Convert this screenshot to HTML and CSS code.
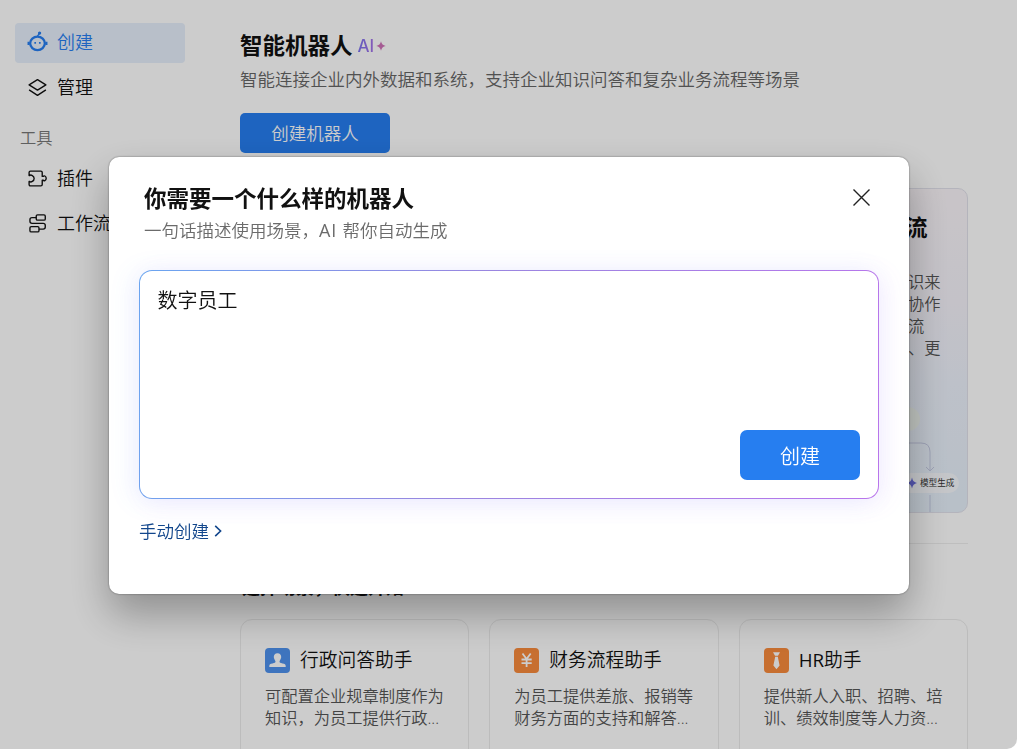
FILE: index.html
```html
<!DOCTYPE html>
<html lang="zh-CN">

<head>
    <meta charset="UTF-8">
    <meta name="viewport" content="width=device-width, initial-scale=1.0">
    <title>智能机器人</title>
    <link rel="stylesheet" href="styles.css">
</head>

<body>
    <div class="layout">
        <aside class="sidebar">
            <a class="nav-item active">
                <svg class="nav-icon" viewBox="0 0 20 20">
                    <path d="M10 4L11.8 1.2" />
                    <circle cx="12" cy="1" r=".9" fill="currentColor" />
                    <ellipse cx="10" cy="10.8" rx="7" ry="6.4" stroke-width="2.2" />
                    <path d="M1.5 9.2v3.2M18.5 9.2v3.2" stroke-width="2" />
                    <path d="M7.8 9.5v1.8M12.2 9.5v1.8" stroke-width="1.6" />
                </svg>
                <span>创建</span>
            </a>
            <a class="nav-item">
                <svg class="nav-icon" viewBox="0 0 20 20">
                    <path d="M10 2.5L18 7.5L10 12.5L2 7.5Z" />
                    <path d="M2 12.3L10 17.5L18 12.3" />
                </svg>
                <span>管理</span>
            </a>
            <p class="nav-label">工具</p>
            <a class="nav-item">
                <svg class="nav-icon" viewBox="0 0 20 20">
                    <path d="M2 7.2V4.3Q2 3 3.3 3H13.2Q14.5 3 14.5 4.3V8H15.6C15.8 6.8 18.3 7.6 18.3 9.8S15.8 12.8 15.6 11.6H14.5V15.7Q14.5 17 13.2 17H3.3Q2 17 2 15.7V12.8H2.6C3.6 14 6.8 12.6 6.8 10S3.6 6 2.6 7.2Z" />
                </svg>
                <span>插件</span>
            </a>
            <a class="nav-item">
                <svg class="nav-icon" viewBox="0 0 20 20">
                    <rect x="8.8" y="1.8" width="8.6" height="5" rx="1.2" />
                    <rect x="2.8" y="13" width="8.6" height="5" rx="1.2" />
                    <path d="M8.8 4.4H4.8Q2.8 4.4 2.8 6.4V7.9Q2.8 9.9 4.8 9.9H15.4Q17.4 9.9 17.4 11.9V13.4Q17.4 15.4 15.4 15.4H11.4" />
                </svg>
                <span>工作流</span>
            </a>
        </aside>

        <main class="main">
            <div class="page-title">
                <h1>智能机器人</h1>
                <span class="ai-tag">AI</span>
                <svg class="ai-star" viewBox="0 0 10 10">
                    <path d="M5 .3Q5.8 4.2 9.7 5Q5.8 5.8 5 9.7Q4.2 5.8 .3 5Q4.2 4.2 5 .3Z" />
                </svg>
            </div>
            <p class="page-desc">智能连接企业内外数据和系统，支持企业知识问答和复杂业务流程等场景</p>
            <button class="create-btn">创建机器人</button>

            <section class="features">
                <article class="feature">
                    <h2>流</h2>
                    <p>识来<br>协作<br>流<br>、更</p>
                    <svg class="flow" viewBox="0 0 228 130">
                        <circle cx="168" cy="37" r="12" class="flow-glow" />
                        <path d="M100 61H181Q190 61 190 70V89M186 85L190 89L194 85M190 113V130" class="flow-line" />
                        <rect x="160" y="91" width="59" height="20" rx="10" class="flow-tag" />
                        <path d="M172 95.5Q172.8 100.2 177 101Q172.8 101.8 172 106.5Q171.2 101.8 167 101Q171.2 100.2 172 95.5Z" class="flow-star" />
                        <text x="180" y="104.2" class="flow-text">模型生成</text>
                    </svg>
                </article>
            </section>

            <h2 class="section-title">选择场景，快速开始</h2>
            <section class="scenes">
                <article class="scene">
                    <h3>
                        <svg class="scene-icon blue" viewBox="0 0 25 25">
                            <path d="M12.5 5.2C10 5.2 8.6 7 8.8 9.3C9 11.3 10.4 12.4 10.5 13.6C10.5 14.8 9.8 15 7.5 15.4C5.2 15.8 4.3 16.4 4.3 18V19H20.7V18C20.7 16.4 19.8 15.8 17.5 15.4C15.2 15 14.5 14.8 14.5 13.6C14.6 12.4 16 11.3 16.2 9.3C16.4 7 15 5.2 12.5 5.2Z" />
                        </svg>
                        行政问答助手
                    </h3>
                    <p>可配置企业规章制度作为<br>知识，为员工提供行政...</p>
                </article>
                <article class="scene">
                    <h3>
                        <svg class="scene-icon orange" viewBox="0 0 25 25">
                            <path class="stroke" d="M8.5 5.5L12.6 11L16.7 5.5M12.6 11V19M7.5 11.5H17.7M7.5 15.2H17.7" />
                        </svg>
                        财务流程助手
                    </h3>
                    <p>为员工提供差旅、报销等<br>财务方面的支持和解答...</p>
                </article>
                <article class="scene">
                    <h3>
                        <svg class="scene-icon orange" viewBox="0 0 25 25">
                            <path d="M9 4.2H16L14 7.8H11ZM11.2 8.8H13.8L15.6 17.5L12.5 21.2L9.4 17.5Z" />
                        </svg>
                        <span><span class="latin">HR</span>助手</span>
                    </h3>
                    <p>提供新人入职、招聘、培<br>训、绩效制度等人力资...</p>
                </article>
            </section>
        </main>
    </div>

    <div class="mask">
        <div class="modal">
            <header class="modal-header">
                <div>
                    <h2>你需要一个什么样的机器人</h2>
                    <p>一句话描述使用场景，<span class="latin">AI </span>帮你自动生成</p>
                </div>
                <svg class="close" viewBox="0 0 17 17">
                    <path d="M.5 .5L16.5 16.5M16.5 .5L.5 16.5" />
                </svg>
            </header>
            <div class="prompt">
                <p>数字员工</p>
                <button class="submit-btn">创建</button>
            </div>
            <a class="manual">
                手动创建
                <svg viewBox="0 0 8 12">
                    <path d="M1.2 .8L6.6 6L1.2 11.2" />
                </svg>
            </a>
        </div>
    </div>
</body>

</html>
```
FILE: styles.css
```css
* {
    box-sizing: border-box;
    margin: 0;
    padding: 0;
}

html,
body {
    width: 100%;
    height: 100%;
    overflow: hidden;
}

body {
    background: #fff;
    color: #111;
    font-family: "Open Sans", "Noto Sans CJK SC", sans-serif;
    font-size: 17.5px;
    font-weight: 350;
}

button {
    border: none;
    color: #fff;
    font-family: inherit;
    font-weight: 350;
}

svg {
    flex: none;
    fill: none;
    stroke: currentColor;
}

.latin {
    font-weight: 400;
}

.layout {
    display: flex;
    height: 749px;
    overflow: hidden;
}

/* sidebar */
.sidebar {
    width: 200px;
    padding: 22.5px 15px;
    flex: none;
}

.nav-item {
    display: flex;
    align-items: center;
    gap: 9px;
    height: 40px;
    margin-bottom: 5px;
    padding-left: 12px;
    border-radius: 4px;
    font-size: 18px;
    line-height: 30px;
    white-space: nowrap;
}

.nav-item span {
    padding-bottom: 2px;
}

.nav-item.active {
    background: #e6effc;
    color: #267ef0;
}

.nav-icon {
    width: 21px;
    height: 21px;
    stroke-width: 1.3;
    stroke-linejoin: round;
    overflow: visible;
}

.nav-label {
    height: 46px;
    padding-left: 5px;
    color: #777;
    font-size: 16.25px;
    line-height: 51px;
}

/* main */
.main {
    width: 728px;
    margin-left: 40px;
    padding-top: 30px;
}

.page-title {
    display: flex;
    align-items: center;
    height: 32px;
}

.page-title h1 {
    font-size: 22.5px;
    font-weight: 700;
    line-height: 34px;
}

.ai-tag {
    margin-left: 5px;
    background: linear-gradient(90deg, #7a72f0, #a874e8);
    -webkit-background-clip: text;
    background-clip: text;
    color: transparent;
    font-family: Inter, sans-serif;
    font-size: 17px;
    font-weight: 500;
}

.ai-star {
    width: 10px;
    height: 10px;
    margin-left: 2px;
    fill: #cf72b8;
    stroke: none;
}

.page-desc {
    height: 34px;
    color: #666;
    line-height: 35px;
    white-space: nowrap;
}

.create-btn {
    display: block;
    width: 150px;
    height: 40px;
    margin-top: 17px;
    border-radius: 5px;
    background: #267ef0;
    font-size: 17.5px;
    line-height: 40px;
}

.features {
    display: flex;
    justify-content: flex-end;
    margin-top: 35px;
    padding-bottom: 30px;
    border-bottom: 1px solid #eee;
}

.feature {
    display: flex;
    flex-direction: column;
    width: 229px;
    height: 325px;
    padding-top: 22px;
    border: 1px solid #e2e2ec;
    border-radius: 10px;
    background: linear-gradient(180deg, #fbf6fa 0%, #f5f3fa 35%, #edf2fc 60%, #e6f0fa 100%);
    overflow: hidden;
}

.feature h2 {
    margin-left: 165px;
    font-size: 22.5px;
    font-weight: 700;
    line-height: 33px;
}

.feature p {
    margin: 27px 0 0 168px;
    color: #555;
    font-size: 16.25px;
    line-height: 22px;
}

.flow {
    display: block;
    width: 228px;
    height: 130px;
    margin-top: auto;
    stroke: none;
}

.flow-glow {
    fill: #f0f5f0;
}

.flow-line {
    fill: none;
    stroke: #c4c9e2;
}

.flow-tag {
    fill: #f6f8fc;
}

.flow-star {
    fill: #6a6cdc;
}

.flow-text {
    fill: #333;
    font-size: 8.6px;
    font-weight: 400;
}

.section-title {
    height: 26px;
    margin-top: 30px;
    padding-left: 2px;
    font-size: 18px;
    font-weight: 700;
    line-height: 27px;
}

.scenes {
    display: grid;
    grid-template-columns: repeat(3, 1fr);
    gap: 20px;
    margin-top: 19px;
}

.scene {
    height: 160px;
    padding: 25px 0 0 24px;
    border: 1px solid #ececec;
    border-radius: 12px;
    white-space: nowrap;
}

.scene h3 {
    display: flex;
    align-items: center;
    gap: 10px;
    height: 30px;
    font-size: 18.75px;
    font-weight: 350;
    line-height: 32px;
}

.scene-icon {
    width: 25px;
    height: 25px;
    border-radius: 4px;
    fill: #fff;
    stroke: none;
}

.scene-icon.blue {
    background: #4e92ee;
}

.scene-icon.orange {
    background: #f98b3c;
}

.scene-icon .stroke {
    fill: none;
    stroke: #fff;
    stroke-width: 1.8;
}

.scene p {
    margin-top: 10px;
    color: #555;
    font-size: 16.25px;
    line-height: 22px;
}

/* dialog */
.mask {
    position: fixed;
    top: 0;
    left: 0;
    width: 1017px;
    height: 749px;
    padding: 157px 0 0 109px;
    border-bottom-right-radius: 10px;
    background: rgba(0, 0, 0, 0.2);
}

.modal {
    width: 800px;
    height: 437px;
    padding: 26px 30px;
    border-radius: 10px;
    background: #fff;
    box-shadow: 0 0 2px rgba(0, 0, 0, 0.5), 0 20px 40px rgba(0, 0, 0, 0.3);
}

.modal-header {
    display: flex;
    justify-content: space-between;
    height: 87px;
    padding: 0 9px 0 5px;
}

.modal-header h2 {
    font-size: 22.5px;
    font-weight: 700;
    line-height: 32px;
}

.modal-header p {
    color: #6b6b6b;
    line-height: 31px;
}

.modal-header .latin {
    font-size: 18px;
    letter-spacing: 0.8px;
}

.close {
    width: 17px;
    height: 17px;
    margin-top: 6px;
    stroke: #222;
    stroke-width: 1.4;
}

.prompt {
    display: flex;
    flex-direction: column;
    justify-content: space-between;
    height: 229px;
    padding: 15px 18px 18px 17px;
    border: 1.25px solid transparent;
    border-radius: 13px;
    background: linear-gradient(#fff, #fff) padding-box, linear-gradient(100deg, #6aa5f0, #9a86e0 45%, #b975ec) border-box;
    box-shadow: -6px 2px 26px rgba(90, 150, 255, 0.1), 6px 4px 26px rgba(180, 100, 255, 0.09);
}

.prompt p {
    padding-left: 0.5px;
    font-size: 20px;
    line-height: 30px;
}

.submit-btn {
    align-self: flex-end;
    width: 120px;
    height: 50px;
    padding-top: 3px;
    border-radius: 7px;
    background: #267ef0;
    font-size: 20px;
    line-height: 47px;
}

.manual {
    display: flex;
    align-items: center;
    gap: 5px;
    height: 26px;
    margin-top: 19px;
    color: #12468c;
    line-height: 24px;
}

.manual svg {
    width: 8px;
    height: 12px;
    stroke-width: 1.6;
}
```
